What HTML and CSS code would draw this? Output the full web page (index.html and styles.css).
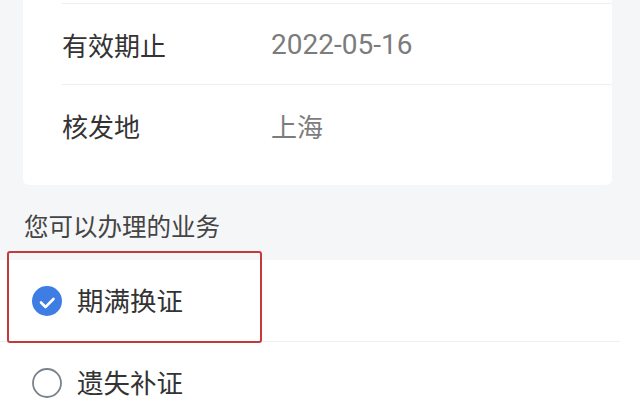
FILE: index.html
```html
<!DOCTYPE html>
<html lang="zh-CN">
<head>
    <meta charset="UTF-8">
    <meta name="viewport" content="width=device-width, initial-scale=1.0">
    <title>证件信息</title>
    <link rel="stylesheet" href="styles.css">
</head>
<body>
    <div class="info-card">
        <div class="info-row">
            <span class="info-label">有效期止</span>
            <span class="info-value">2022-05-16</span>
        </div>
        <div class="info-row">
            <span class="info-label">核发地</span>
            <span class="info-value text">上海</span>
        </div>
    </div>
    <h3 class="section-title">您可以办理的业务</h3>
    <div class="service-list">
        <div class="service-item selected">
            <span class="radio checked">
                <svg width="30" height="30" viewBox="0 0 30 30">
                    <circle cx="15" cy="15" r="15" fill="#3d7de4"/>
                    <path d="M9 16.5 L13.5 21 L21.5 13" fill="none" stroke="#fff" stroke-width="2.6" stroke-linecap="round" stroke-linejoin="round"/>
                </svg>
            </span>
            <span class="service-name">期满换证</span>
            <div class="highlight-box"></div>
        </div>
        <div class="service-item">
            <span class="radio">
                <svg width="30" height="30" viewBox="0 0 30 30">
                    <circle cx="15" cy="15" r="14" fill="#fff" stroke="#7a828c" stroke-width="1.8"/>
                </svg>
            </span>
            <span class="service-name">遗失补证</span>
        </div>
    </div>
</body>
</html>
```
FILE: styles.css
```css
body {
    font-family: "Noto Sans CJK SC", "Noto Sans", sans-serif;
    background-color: #f5f6f8;
    margin: 0;
    padding: 0;
    color: #333;
}
.info-card {
    background-color: #fff;
    margin: 0 28px 0 23px;
    padding: 3px 0 20px 39px;
    border-radius: 0 0 6px 6px;
}
.info-row {
    display: flex;
    align-items: center;
    height: 80px;
    border-top: 1px solid #eeeff1;
}
.info-label {
    width: 209px;
    font-size: 26px;
    color: #333;
}
.info-value {
    font-family: "Roboto", "Noto Sans CJK SC", sans-serif;
    font-size: 28px;
    color: #7c7c7c;
}
.info-value.text {
    font-family: "Noto Sans CJK SC", sans-serif;
    font-size: 26px;
}
.section-title {
    margin: 0;
    height: 75px;
    padding: 6px 0 0 24px;
    box-sizing: border-box;
    display: flex;
    align-items: center;
    font-size: 24.5px;
    font-weight: normal;
    color: #444;
}
.service-list {
    background-color: #fff;
}
.service-item {
    position: relative;
    display: flex;
    align-items: center;
    gap: 15px;
    height: 81px;
    padding-left: 32px;
    margin-right: 20px;
    border-bottom: 1px solid #eeeff1;
}
.radio {
    display: flex;
    width: 30px;
    height: 30px;
}
.service-name {
    font-size: 26.5px;
    line-height: 1;
    color: #333;
}
.highlight-box {
    position: absolute;
    left: 7px;
    top: -9px;
    width: 251px;
    height: 88px;
    border: 2px solid #c3393c;
    border-radius: 3px;
}
```
